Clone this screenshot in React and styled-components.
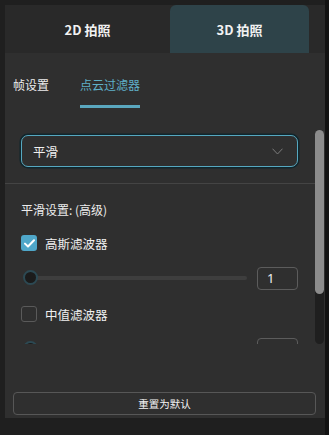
import React from 'react';
import styled, { createGlobalStyle } from 'styled-components';

const Global = createGlobalStyle`
  html, body { margin: 0; padding: 0; background: #1c1c1c; }
  body { font-family: "Noto Sans CJK SC", "Noto Sans", sans-serif; color: #e8e8e8; }
`;

const Frame = styled.div`
  width: 320px;
  height: 435px;
  padding: 5px 0 0 5px;
  border-right: 4px solid #121212;
  background: #1f1f1f;
  display: flex;
  flex-direction: column;
`;

const TabBar = styled.div`
  display: grid;
  grid-template-columns: 165px 139px 1fr;
  height: 48px;
  background: #292929;
`;

const Tab = styled.div`
  display: flex;
  align-items: center;
  justify-content: center;
  font-size: 13px;
  font-weight: 700;
  color: #f2f2f2;
  border-radius: 6px 6px 0 0;
  background: ${(p) => (p.$active ? '#2e4349' : 'transparent')};
`;

const Panel = styled.div`
  height: 365px;
  background: #2f2f2f;
  display: flex;
  flex-direction: column;
`;

const SubTabs = styled.div`
  height: 67px;
  display: flex;
  align-items: flex-start;
  gap: 31px;
  padding: 23px 0 0 8px;
  box-sizing: border-box;
`;

const SubTab = styled.div`
  font-size: 12px;
  line-height: 18px;
  color: ${(p) => (p.$active ? '#5fb0c8' : '#ececec')};
  padding-bottom: 11px;
  border-bottom: 3px solid ${(p) => (p.$active ? '#5aa7be' : 'transparent')};
`;

const ScrollArea = styled.div`
  height: 224px;
  display: flex;
  overflow: hidden;
`;

const Content = styled.div`
  width: 310px;
  flex-shrink: 0;
`;

const Scrollbar = styled.div`
  width: 9px;
  margin-top: 10px;
  height: 214px;
  border-radius: 5px;
  background: #1f1f1f;
  display: flex;
  flex-direction: column;
`;

const Thumb = styled.div`
  height: 164px;
  border-radius: 5px;
  background: #8c8c8c;
`;

const SelectBox = styled.div`
  margin: 15px 17px 0 16px;
  height: 32px;
  box-sizing: border-box;
  border: 1.5px solid #56a8c0;
  box-shadow: 0 0 0 1.5px #10262d;
  border-radius: 7px;
  display: flex;
  align-items: center;
  justify-content: space-between;
  padding: 0 14px 0 11px;
  font-size: 12.5px;
  color: #f0f0f0;
`;

const Divider = styled.div`
  margin-top: 16px;
  height: 1px;
  background: #444;
`;

const Section = styled.div`
  padding: 17px 17px 0 16px;
  display: flex;
  flex-direction: column;
`;

const SectionTitle = styled.div`
  font-size: 12px;
  line-height: 18px;
  color: #ececec;
`;

const CheckRow = styled.div`
  display: flex;
  align-items: center;
  gap: 8px;
  height: 20px;
  margin-top: ${(p) => p.$top}px;
  font-size: 12.5px;
  color: #f0f0f0;
`;

const Box = styled.div`
  width: 16px;
  height: 16px;
  box-sizing: border-box;
  border-radius: 3px;
  display: flex;
  align-items: center;
  justify-content: center;
  background: ${(p) => (p.$on ? '#4fa7c9' : 'transparent')};
  border: ${(p) => (p.$on ? 'none' : '1px solid #5a5a5a')};
`;

const SliderRow = styled.div`
  display: flex;
  align-items: center;
  justify-content: space-between;
  height: 24px;
  margin-top: ${(p) => p.$top}px;
`;

const Track = styled.div`
  position: relative;
  width: 216px;
  height: 4px;
  margin-left: 10px;
  border-radius: 2px;
  background: #3e3e3e;
`;

const Knob = styled.div`
  position: absolute;
  left: -8px;
  top: -6px;
  width: 11px;
  height: 11px;
  border-radius: 50%;
  background: #1b1b1b;
  border: 2.5px solid #2c4953;
`;

const NumBox = styled.div`
  width: 41px;
  height: 23px;
  box-sizing: border-box;
  border: 1px solid #5c5c5c;
  border-radius: 4px;
  padding-left: 9px;
  display: flex;
  align-items: center;
  font-family: "Noto Sans", sans-serif;
  font-size: 13px;
  color: #f0f0f0;
`;

const Footer = styled.div`
  flex: 1;
  display: flex;
  align-items: flex-end;
  padding: 0 9px 3px 8px;
`;

const ResetButton = styled.div`
  flex: 1;
  height: 23px;
  box-sizing: border-box;
  border: 1px solid #575757;
  border-radius: 4px;
  display: flex;
  align-items: center;
  justify-content: center;
  font-size: 10.5px;
  color: #f4f4f4;
`;

const Chevron = () => (
  <svg width="11" height="7" viewBox="0 0 11 7" fill="none">
    <path d="M0.5 0.7 L5.5 6 L10.5 0.7" stroke="#7c7c7c" strokeWidth="1" />
  </svg>
);

const Tick = () => (
  <svg width="11" height="9" viewBox="0 0 11 9" fill="none">
    <path d="M1 4.6 L4 7.5 L10 1.3" stroke="#fff" strokeWidth="2" strokeLinecap="round" strokeLinejoin="round" />
  </svg>
);

const FilterRow = ({ label, on, top, value }) => (
  <>
    <CheckRow $top={top}>
      <Box $on={on}>{on && <Tick />}</Box>
      {label}
    </CheckRow>
    <SliderRow $top={13}>
      <Track>
        <Knob />
      </Track>
      <NumBox>{value}</NumBox>
    </SliderRow>
  </>
);

export default function App() {
  return (
    <>
      <Global />
      <Frame>
        <TabBar>
          <Tab>2D 拍照</Tab>
          <Tab $active>3D 拍照</Tab>
        </TabBar>
        <Panel>
          <SubTabs>
            <SubTab>帧设置</SubTab>
            <SubTab $active>点云过滤器</SubTab>
          </SubTabs>
          <ScrollArea>
            <Content>
              <SelectBox>
                平滑
                <Chevron />
              </SelectBox>
              <Divider />
              <Section>
                <SectionTitle>平滑设置: (高级)</SectionTitle>
                <FilterRow label="高斯滤波器" on top={14} value="1" />
                <FilterRow label="中值滤波器" top={14} value="1" />
              </Section>
            </Content>
            <Scrollbar>
              <Thumb />
            </Scrollbar>
          </ScrollArea>
          <Footer>
            <ResetButton>重置为默认</ResetButton>
          </Footer>
        </Panel>
      </Frame>
    </>
  );
}
